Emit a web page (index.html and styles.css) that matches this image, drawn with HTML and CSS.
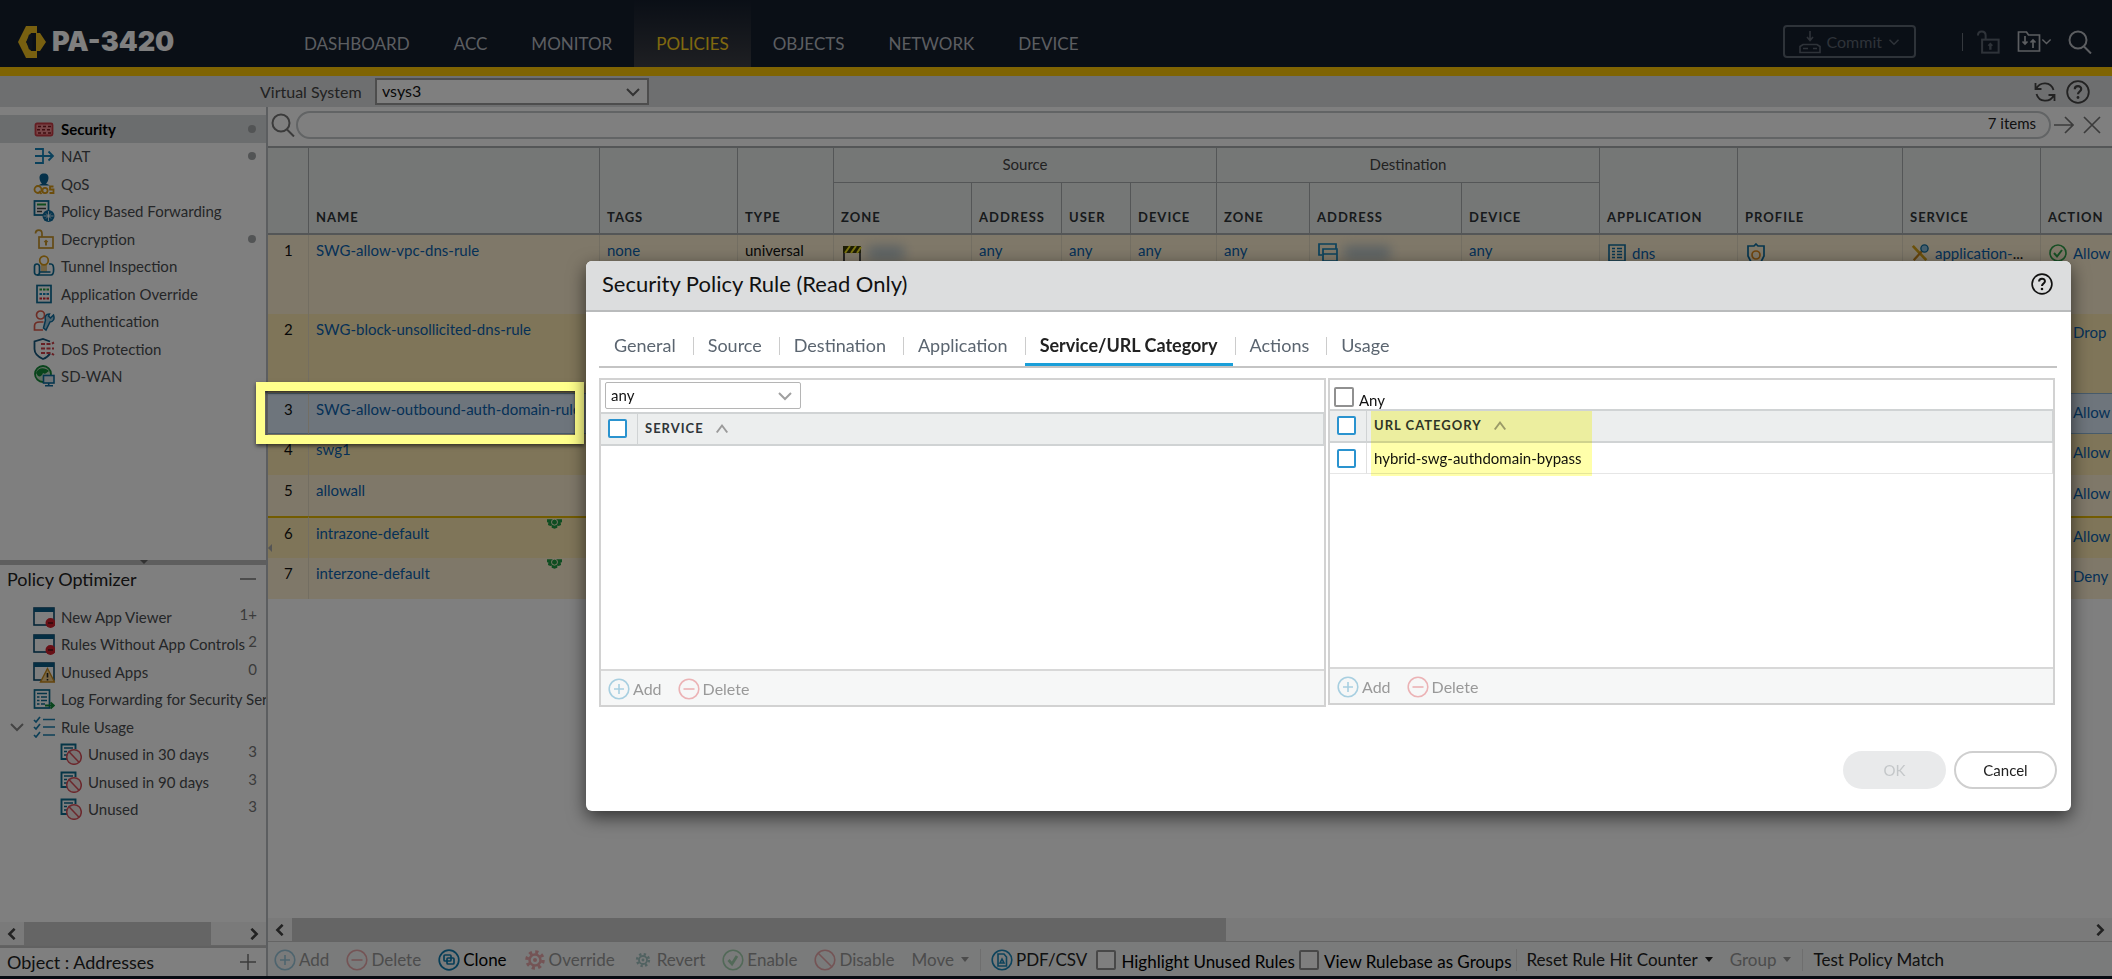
FILE: index.html
```html
<!DOCTYPE html>
<html lang="en">
<head>
	<meta charset="utf-8"/>
	<meta name="viewport" content="width=device-width,initial-scale=1.0"/>
	<title>PA-3420</title>
	<link rel="stylesheet" href="styles.css">
</head>
<body>

<!-- icon sprite -->
<svg class="sprite" aria-hidden="true">
	<symbol id="i-chevron" viewBox="0 0 16 16"><path d="M2 5l6 6 6-6" fill="none" stroke="currentColor" stroke-width="2"/></symbol>
	<symbol id="i-bold" viewBox="0 0 16 16"><path d="M1 4.500l7 7 7-7" fill="none" stroke="currentColor" stroke-width="3.400"/></symbol>
	<symbol id="i-sort" viewBox="0 0 16 16"><path d="M2 12l6-8 6 8" fill="none" stroke="currentColor" stroke-width="2.200"/></symbol>
	<symbol id="i-search" viewBox="0 0 24 24"><g fill="none" stroke="currentColor" stroke-width="2"><circle cx="10" cy="10" r="8.5"/><path d="M16 16.5l7 7"/></g></symbol>
	<symbol id="i-help" viewBox="0 0 24 24"><circle cx="12" cy="12" r="10.8" fill="none" stroke="currentColor" stroke-width="1.8"/><path d="M8.8 9.2c0-4 6.400-4 6.400-.2 0 2.500-3.200 2.500-3.200 5.300" fill="none" stroke="currentColor" stroke-width="2.200"/><circle cx="12" cy="17.500" r="1.400" fill="currentColor"/></symbol>
	<symbol id="i-plus" viewBox="0 0 22 22"><g fill="none" stroke="#1a86b8" stroke-width="1.600"><circle cx="11" cy="11" r="9.800"/><path d="M11 6v10M6 11h10"/></g></symbol>
	<symbol id="i-minus" viewBox="0 0 22 22"><g fill="none" stroke="#d9363e" stroke-width="1.600"><circle cx="11" cy="11" r="9.800"/><path d="M5.500 11h11"/></g></symbol>
	<symbol id="i-wall" viewBox="0 0 22 22"><rect x="2.500" y="5.500" width="17" height="12" rx="1.500" fill="#f08c90" stroke="#c93a44" stroke-width="1.800"/><path d="M5 8.500h3M10 8.500h3M15 8.500h3M4 11.700h3M9 11.700h3M14 11.700h3M5 15h3M10 15h3M15 15h3" stroke="#7c1a22" stroke-width="1.500"/></symbol>
	<symbol id="i-nat" viewBox="0 0 22 22"><g fill="none" stroke="#1583b9" stroke-width="1.800"><path d="M2 4h8v14H2M2 11h18M15.500 6.500L20 11l-4.500 4.500"/></g></symbol>
	<symbol id="i-qos" viewBox="0 0 22 22"><path d="M11 0.500c3.500 0 4.500 2 4.500 4.500S14 10 13 10.500l4 2H5l4-2C8 10 6.500 7.500 6.500 5S7.500.5 11 .5z" fill="#0b6394"/><g fill="none" stroke="#d99a17" stroke-width="1.800"><circle cx="5" cy="16.500" r="3.500"/><path d="M6 18l2.500 3"/><circle cx="12" cy="17.500" r="2.600"/><path d="M20.500 13.500h-3.500v3h3.500v3.500h-4"/></g></symbol>
	<symbol id="i-pbf" viewBox="0 0 22 22"><rect x="1.500" y="1" width="14" height="14" fill="none" stroke="#0b6b94" stroke-width="1.800"/><path d="M4 4.500h9" stroke="#219a3b" stroke-width="2"/><path d="M4 8.500h9M4 11.500h5" stroke="#444" stroke-width="1.600"/><circle cx="15.500" cy="16" r="6" fill="#0f6d9e"/><path d="M15.500 11v10M10.500 16h10M13 13.500l5 5M18 13.500l-5 5" stroke="#fff" stroke-width=".8"/></symbol>
	<symbol id="i-unlock" viewBox="0 0 22 22"><g fill="none" stroke="currentColor" stroke-width="1.700"><rect x="6" y="9" width="14" height="11"/><path d="M9 9V5.500C9 1 2.500 1 2.500 5.500"/></g><path d="M13 11.500l2.300 2.300-1.300.7V17.500h-2v-3l-1.300-.7z" fill="currentColor"/></symbol>
	<symbol id="i-tunnel" viewBox="0 0 22 22"><path d="M8 10h6v7H8z" fill="#e8c987"/><circle cx="11" cy="5.500" r="4.300" fill="none" stroke="#d99a17" stroke-width="1.700"/><g fill="none" stroke="#0b6b94" stroke-width="1.700"><rect x="1.500" y="9" width="5" height="11" rx="2.500"/><path d="M4 20h14c3.500 0 3.500-11 0-11h-2M6.500 17h11"/></g></symbol>
	<symbol id="i-appover" viewBox="0 0 22 22"><rect x="4" y="2.500" width="14" height="17" fill="none" stroke="#0b6b94" stroke-width="1.700"/><path d="M6.500 6.500h2.500M10 6.500h2.500M13.500 6.500h2.500" stroke="#219a3b" stroke-width="2.200"/><path d="M6.500 11h2.500M10 11h2.500M13.500 11h2.500" stroke="#1583b9" stroke-width="2.200"/><path d="M6.500 15.500h2.500M10 15.500h2.500M13.500 15.500h2.500" stroke="#d4202c" stroke-width="2.200"/></symbol>
	<symbol id="i-auth" viewBox="0 0 22 22"><g fill="none" stroke="#db5a4a" stroke-width="1.700"><circle cx="7.500" cy="5" r="4"/><path d="M10 20H1.500v-4c0-3 2-4 5-4h4"/></g><path d="M20.500 5l-3 3-2-2 1-2c-4 0-5 3-4 6l-2 8 2.500 2 4-8c3 0 5-3 3.500-7z" fill="#9fc8dd" stroke="#0f6d9e" stroke-width="1.500"/></symbol>
	<symbol id="i-dos" viewBox="0 0 22 22"><path d="M17 3.500l-7-2.500-8.500 2.500V11c0 5 4 8 8.500 10 3-1 5.500-3 7-5.500" fill="none" stroke="#16587f" stroke-width="1.800"/><path d="M8 6h10l3-1.500M8 10.500h13M8 15h10l3 2" fill="none" stroke="#cf3f48" stroke-width="2" stroke-dasharray="4 1.500"/></symbol>
	<symbol id="i-sdwan" viewBox="0 0 22 22"><circle cx="10" cy="9" r="8" fill="#c2ddc4" stroke="#128a38" stroke-width="1.800"/><path d="M3 8c2-6 9-6 13-2-2 1-3 4-6 2-1 3-3 4-5 3z" fill="#128a38"/><rect x="10.500" y="10.500" width="10.500" height="7.500" fill="#dfe9ef" stroke="#0f6d9e" stroke-width="1.600"/><path d="M15.700 18v2.500M12 20.800h8" stroke="#0f6d9e" stroke-width="1.600"/></symbol>
	<symbol id="i-appview" viewBox="0 0 22 22"><rect x="1" y="2" width="20" height="17" fill="none" stroke="#0a4a6e" stroke-width="1.600"/><path d="M1 2h20v4H1z" fill="#0a5d86"/><circle cx="17.500" cy="17" r="5" fill="#d0202c"/><path d="M15 17h5" stroke="#5b1218" stroke-width="1.500"/></symbol>
	<symbol id="i-appwarn" viewBox="0 0 22 22"><rect x="1" y="2" width="20" height="17" fill="none" stroke="#0a4a6e" stroke-width="1.600"/><path d="M1 2h20v4H1z" fill="#0a5d86"/><path d="M14.500 7.500L21.500 21h-14z" fill="#f3cf8c" stroke="#c98a1a" stroke-width="1.400"/><path d="M14.500 12v4.500M14.500 18v1.500" stroke="#222" stroke-width="1.600"/></symbol>
	<symbol id="i-log" viewBox="0 0 22 22"><rect x="1.500" y="2" width="15" height="18" fill="none" stroke="#0a6a8e" stroke-width="1.700"/><path d="M4 5.500h10M4 9h2.500M8 9h6M4 12.500h2.500M8 12.500h6M4 16h2.500M8 16h4" stroke="#0a6a8e" stroke-width="1.600"/><path d="M12 17.500h8M17.500 14.500l3.500 3-3.500 3" fill="none" stroke="#128a38" stroke-width="1.800"/></symbol>
	<symbol id="i-usage" viewBox="0 0 22 22"><g fill="none" stroke="#1a7fae" stroke-width="1.700"><path d="M1 4l2 2 4-5M1 11l2 2 4-5M1 19l2 2 4-5M10 3.500h12M10 11h12M10 19h12"/></g></symbol>
	<symbol id="i-unused" viewBox="0 0 22 22"><path d="M7 16H1.500V1.500h14V6" fill="none" stroke="#0a6a8e" stroke-width="1.900"/><path d="M4 5h9M4 8.500h3M4 12h3M8.500 8.500h3" stroke="#0a6a8e" stroke-width="1.600"/><circle cx="14" cy="14" r="7.300" fill="#efe0e0" fill-opacity=".8" stroke="#d8505a" stroke-width="1.500"/><path d="M9 8.800L19 19.200" stroke="#d8505a" stroke-width="1.500"/></symbol>
	<symbol id="i-gear" viewBox="0 0 22 22"><circle cx="11" cy="11" r="8" fill="none" stroke="currentColor" stroke-width="3.500" stroke-dasharray="3.140 3.140"/><circle cx="11" cy="11" r="5.500" fill="none" stroke="currentColor" stroke-width="2.500"/><circle cx="11" cy="11" r="2" fill="currentColor"/></symbol>
	<symbol id="i-cog" viewBox="0 0 16 10"><path d="M0 0h16v3l-1.500.5L15 6l-2.500 1-1.500-.5V9L8 10 5 9V6.500L3.500 7 1 6l.5-2.500L0 3z" fill="currentColor"/><circle cx="8" cy="3" r="3.200" fill="none" stroke="#fff1d3" stroke-width="1"/></symbol>
</svg>

<div class="app">
	<header class="topbar">
		<a class="logo" href="#">
			<svg class="logo__mark" viewBox="0 0 28 32"><path fill="#f0c020" fill-rule="evenodd" d="M8 0h11v7h3l6 9-6 9h-3v7H8L0 16zM13 7l-5 9 5 9h5V7z"/><path d="M11 8.500h3.500v15H11L8.500 16z" fill="#1b2636"/></svg>
			<span>PA-3420</span>
		</a>
		<nav class="menu">
			<a class="menu__item" href="#">DASHBOARD</a>
			<a class="menu__item" href="#">ACC</a>
			<a class="menu__item" href="#">MONITOR</a>
			<a class="menu__item menu__item_on" href="#">POLICIES</a>
			<a class="menu__item" href="#">OBJECTS</a>
			<a class="menu__item" href="#">NETWORK</a>
			<a class="menu__item" href="#">DEVICE</a>
		</nav>
		<div class="topbar__tools">
			<button class="commit" type="button">
				<svg width="22" height="24" viewBox="0 0 22 24" fill="none" stroke="currentColor" stroke-width="1.600"><path d="M11 1v9M8 7l3 3.500L14 7M4 14.500h14l3 2v6H1v-6zM4 18.500h5M14 18.500h4"/></svg>
				<span>Commit</span>
				<svg width="12" height="12"><use href="#i-chevron"/></svg>
			</button>
			<i class="topbar__sep"></i>
			<button class="tool tool_dim" type="button" aria-label="Locks"><svg width="26" height="26"><use href="#i-unlock"/></svg></button>
			<button class="tool" type="button" aria-label="Config">
				<svg width="24" height="24" viewBox="0 0 24 24" fill="none" stroke="currentColor" stroke-width="1.700"><path d="M1.500 2h8l2 3h11v16h-21zM8 6v8M5.500 11.500L8 14l2.500-2.500M16 18v-8M13.500 12.500L16 10l2.500 2.500"/></svg>
				<svg width="11" height="11"><use href="#i-chevron"/></svg>
			</button>
			<button class="tool" type="button" aria-label="Search"><svg width="24" height="24"><use href="#i-search"/></svg></button>
		</div>
	</header>

	<div class="vsys">
		<label class="vsys__label" for="vsys">Virtual System</label>
		<span class="pick vsys__pick">
			<select id="vsys"><option>vsys3</option></select>
			<svg><use href="#i-chevron"/></svg>
		</span>
		<div class="vsys__tools">
			<button class="tool" type="button" aria-label="Refresh"><svg width="22" height="22" viewBox="0 0 22 22" fill="none" stroke="currentColor" stroke-width="1.800"><path d="M1.500 2v6h6M20.500 20v-6h-6M2 8C6 0 17 .5 19.500 9M20 14C16 22 5 21.500 2.500 13"/></svg></button>
			<button class="tool" type="button" aria-label="Help"><svg width="24" height="24"><use href="#i-help"/></svg></button>
		</div>
	</div>

	<div class="body">
		<aside class="side">
			<ul class="tree tree_top">
				<li class="tree__row tree__row_on"><svg><use href="#i-wall"/></svg><a href="#">Security</a><i class="dot"></i></li>
				<li class="tree__row"><svg><use href="#i-nat"/></svg><a href="#">NAT</a><i class="dot"></i></li>
				<li class="tree__row"><svg><use href="#i-qos"/></svg><a href="#">QoS</a></li>
				<li class="tree__row"><svg><use href="#i-pbf"/></svg><a href="#">Policy Based Forwarding</a></li>
				<li class="tree__row"><svg class="gold"><use href="#i-unlock"/></svg><a href="#">Decryption</a><i class="dot"></i></li>
				<li class="tree__row"><svg><use href="#i-tunnel"/></svg><a href="#">Tunnel Inspection</a></li>
				<li class="tree__row"><svg><use href="#i-appover"/></svg><a href="#">Application Override</a></li>
				<li class="tree__row"><svg><use href="#i-auth"/></svg><a href="#">Authentication</a></li>
				<li class="tree__row"><svg><use href="#i-dos"/></svg><a href="#">DoS Protection</a></li>
				<li class="tree__row"><svg><use href="#i-sdwan"/></svg><a href="#">SD-WAN</a></li>
			</ul>
			<div class="split"><i></i></div>
			<div class="side__head">
				<span>Policy Optimizer</span>
				<button type="button" aria-label="Collapse"><svg width="16" height="16" viewBox="0 0 16 16"><path d="M0 8h16" stroke="currentColor" stroke-width="1.500"/></svg></button>
			</div>
			<ul class="tree tree_opt">
				<li class="tree__row"><svg><use href="#i-appview"/></svg><a href="#">New App Viewer</a><b>1+</b></li>
				<li class="tree__row"><svg><use href="#i-appview"/></svg><a href="#">Rules Without App Controls</a><b>2</b></li>
				<li class="tree__row"><svg><use href="#i-appwarn"/></svg><a href="#">Unused Apps</a><b>0</b></li>
				<li class="tree__row tree__row_long"><svg><use href="#i-log"/></svg><a href="#">Log Forwarding for Security Ser</a></li>
				<li class="tree__row tree__row_open"><svg class="tree__arrow"><use href="#i-chevron"/></svg><svg><use href="#i-usage"/></svg><a href="#">Rule Usage</a></li>
				<li class="tree__row tree__row_sub"><svg><use href="#i-unused"/></svg><a href="#">Unused in 30 days</a><b>3</b></li>
				<li class="tree__row tree__row_sub"><svg><use href="#i-unused"/></svg><a href="#">Unused in 90 days</a><b>3</b></li>
				<li class="tree__row tree__row_sub"><svg><use href="#i-unused"/></svg><a href="#">Unused</a><b>3</b></li>
			</ul>
			<div class="scroll scroll_side">
				<svg class="scroll__left"><use href="#i-bold"/></svg>
				<div class="scroll__track"><i class="scroll__thumb scroll__thumb_side"></i></div>
				<svg class="scroll__right"><use href="#i-bold"/></svg>
			</div>
			<div class="side__foot">
				<span>Object : Addresses</span>
				<button type="button" aria-label="Expand"><svg width="16" height="16" viewBox="0 0 16 16"><path d="M0 8h16M8 0v16" stroke="currentColor" stroke-width="1.500"/></svg></button>
			</div>
		</aside>

		<main class="main">
			<div class="find">
				<svg width="24" height="24"><use href="#i-search"/></svg>
				<div class="find__box">
					<input type="text" aria-label="Filter rules">
					<span>7 items</span>
				</div>
				<svg width="20" height="20" viewBox="0 0 20 20" fill="none" stroke="currentColor" stroke-width="1.700"><path d="M0 10h19M11 2l8 8-8 8"/></svg>
				<svg width="18" height="18" viewBox="0 0 18 18" fill="none" stroke="currentColor" stroke-width="1.700"><path d="M1 1l16 16M17 1L1 17"/></svg>
			</div>

			<div class="grid">
				<i class="grid__fold"></i>
				<table class="rules">
					<colgroup>
						<col class="c41"><col class="c291"><col class="c138"><col class="c96"><col class="c138"><col class="c90"><col class="c69"><col class="c86"><col class="c93"><col class="c152"><col class="c138"><col class="c138"><col class="c165"><col class="c138"><col class="c138">
					</colgroup>
					<thead>
						<tr>
							<th rowspan="2"></th>
							<th rowspan="2">NAME</th>
							<th rowspan="2">TAGS</th>
							<th rowspan="2">TYPE</th>
							<th class="rules__group" colspan="4">Source</th>
							<th class="rules__group" colspan="3">Destination</th>
							<th rowspan="2">APPLICATION</th>
							<th rowspan="2">PROFILE</th>
							<th rowspan="2">SERVICE</th>
							<th rowspan="2">ACTION</th>
						</tr>
						<tr class="rules__sub">
							<th>ZONE</th><th>ADDRESS</th><th>USER</th><th>DEVICE</th><th>ZONE</th><th>ADDRESS</th><th>DEVICE</th>
						</tr>
					</thead>
					<tbody>
						<tr class="tall">
							<td>1</td>
							<td><a href="#">SWG-allow-vpc-dns-rule</a></td>
							<td><a href="#">none</a></td>
							<td>universal</td>
							<td>
								<span class="cell"><svg width="20" height="20" viewBox="0 0 20 20"><path d="M1 3h18v7H1z" fill="#3a3a08"/><path d="M3 10l5-7M9 10l5-7M15 10l4-6" stroke="#f5e61e" stroke-width="2"/><path d="M2 10v10M18 10v10" stroke="#222" stroke-width="1.600"/></svg><i class="smudge"></i></span>
							</td>
							<td><a href="#">any</a></td>
							<td><a href="#">any</a></td>
							<td><a href="#">any</a></td>
							<td><a href="#">any</a></td>
							<td>
								<span class="cell"><svg width="20" height="20" viewBox="0 0 20 20" fill="none" stroke="#1583b9" stroke-width="1.700"><path d="M4 12H1V1h17v5M5 6h14v12H5zM5 11h14"/></svg><i class="smudge smudge_wide"></i></span>
							</td>
							<td><a href="#">any</a></td>
							<td>
								<span class="cell"><svg width="18" height="18" viewBox="0 0 18 18" fill="none" stroke="#0f6d9e" stroke-width="1.600"><path d="M1 1h16v16H1zM4 4.500h3M9 4.500h5M4 7.500h3M9 7.500h5M4 10.500h3M9 10.500h5M4 13.500h3M9 13.500h5"/></svg><a href="#">dns</a></span>
							</td>
							<td>
								<span class="cell"><svg width="20" height="20" viewBox="0 0 20 20" fill="none" stroke-width="1.700"><path d="M10 1l2 2h6v10l-3 6H5l-3-6V3h6z" stroke="#0f6d9e"/><circle cx="10" cy="12" r="4" stroke="#e08a1c"/></svg></span>
							</td>
							<td>
								<span class="cell"><svg width="18" height="18" viewBox="0 0 20 20" fill="none"><path d="M2 2l15 16" stroke="#d9a417" stroke-width="3"/><path d="M3 18L13 7" stroke="#c8861a" stroke-width="2.500"/><circle cx="15" cy="5" r="4" fill="#8fc0dc" stroke="#0f6d9e" stroke-width="1.500"/></svg><a href="#">application-<em>...</em></a></span>
							</td>
							<td>
								<span class="cell"><svg width="18" height="18" viewBox="0 0 18 18" fill="none" stroke="#2f9e4a" stroke-width="1.600"><circle cx="9" cy="9" r="8"/><path d="M5 9l3 3.500L13 6" stroke-width="2"/></svg><a href="#">Allow</a></span>
							</td>
						</tr>
						<tr class="tall even">
							<td>2</td><td><a href="#">SWG-block-unsollicited-dns-rule</a></td>
							<td></td><td></td><td></td><td></td><td></td><td></td><td></td><td></td><td></td><td></td><td></td><td></td>
							<td><span class="cell"><i class="pad"></i><a href="#">Drop</a></span></td>
						</tr>
						<tr class="picked">
							<td>3</td><td><a href="#">SWG-allow-outbound-auth-domain-rule</a></td>
							<td></td><td></td><td></td><td></td><td></td><td></td><td></td><td></td><td></td><td></td><td></td><td></td>
							<td><span class="cell"><i class="pad"></i><a href="#">Allow</a></span></td>
						</tr>
						<tr class="even">
							<td>4</td><td><a href="#">swg1</a></td>
							<td></td><td></td><td></td><td></td><td></td><td></td><td></td><td></td><td></td><td></td><td></td><td></td>
							<td><span class="cell"><i class="pad"></i><a href="#">Allow</a></span></td>
						</tr>
						<tr>
							<td>5</td><td><a href="#">allowall</a></td>
							<td></td><td></td><td></td><td></td><td></td><td></td><td></td><td></td><td></td><td></td><td></td><td></td>
							<td><span class="cell"><i class="pad"></i><a href="#">Allow</a></span></td>
						</tr>
						<tr class="even default">
							<td>6</td><td><a href="#">intrazone-default</a><svg class="cog"><use href="#i-cog"/></svg></td>
							<td></td><td></td><td></td><td></td><td></td><td></td><td></td><td></td><td></td><td></td><td></td><td></td>
							<td><span class="cell"><i class="pad"></i><a href="#">Allow</a></span></td>
						</tr>
						<tr>
							<td>7</td><td><a href="#">interzone-default</a><svg class="cog"><use href="#i-cog"/></svg></td>
							<td></td><td></td><td></td><td></td><td></td><td></td><td></td><td></td><td></td><td></td><td></td><td></td>
							<td><span class="cell"><i class="pad"></i><a href="#">Deny</a></span></td>
						</tr>
					</tbody>
				</table>
			</div>

			<div class="scroll">
				<svg class="scroll__left"><use href="#i-bold"/></svg>
				<div class="scroll__track"><i class="scroll__thumb"></i></div>
				<svg class="scroll__right"><use href="#i-bold"/></svg>
			</div>

			<div class="actions">
				<button type="button" disabled><svg><use href="#i-plus"/></svg>Add</button>
				<button type="button" disabled><svg><use href="#i-minus"/></svg>Delete</button>
				<button class="strong" type="button"><svg viewBox="0 0 22 22" fill="none" stroke="#0f7cb0" stroke-width="1.700"><circle cx="11" cy="11" r="9.800"/><rect x="6" y="6" width="7" height="6" rx="1"/><rect x="9" y="9" width="7" height="6" rx="1"/></svg>Clone</button>
				<button type="button" disabled><svg class="red"><use href="#i-gear"/></svg>Override</button>
				<button type="button" disabled><svg class="teal" viewBox="-4 -4 30 30"><use href="#i-gear" width="22" height="22"/></svg>Revert</button>
				<button type="button" disabled><svg viewBox="0 0 22 22" fill="none" stroke="#2f9e4a" stroke-width="1.600"><circle cx="11" cy="11" r="9.800"/><path d="M6.500 11l3.500 4 5-8" stroke-width="2.800"/></svg>Enable</button>
				<button type="button" disabled><svg viewBox="0 0 22 22" fill="none" stroke="#d9363e" stroke-width="1.600"><circle cx="11" cy="11" r="9.800"/><path d="M4 4l14 14"/></svg>Disable</button>
				<button class="drop drop_last" type="button" disabled>Move</button>
				<i class="actions__sep"></i>
				<button class="pdf" type="button"><svg viewBox="0 0 22 22" fill="none" stroke="#1a86b8" stroke-width="1.600"><circle cx="11" cy="11" r="9.800"/><path d="M7 5h6l2.500 3v9H7zM9 14l2-4 2 4z"/></svg>PDF/CSV</button>
				<label class="tick"><input type="checkbox"><span>Highlight Unused Rules</span></label>
				<label class="tick"><input type="checkbox"><span>View Rulebase as Groups</span></label>
				<i class="actions__sep"></i>
				<button class="drop" type="button">Reset Rule Hit Counter</button>
				<button class="drop drop_last" type="button" disabled>Group</button>
				<i class="actions__sep"></i>
				<button type="button">Test Policy Match</button>
			</div>
		</main>
	</div>
</div>

<div class="mask"></div>
<div class="mark"></div>

<!-- rule dialog -->
<section class="dialog" role="dialog" aria-labelledby="dialog-title">
	<header class="dialog__head">
		<h1 id="dialog-title">Security Policy Rule (Read Only)</h1>
		<button type="button" aria-label="Help"><svg width="22" height="22"><use href="#i-help"/></svg></button>
	</header>
	<nav class="tabs">
		<a class="tabs__item" href="#">General</a>
		<a class="tabs__item" href="#">Source</a>
		<a class="tabs__item" href="#">Destination</a>
		<a class="tabs__item" href="#">Application</a>
		<a class="tabs__item tabs__item_on" href="#">Service/URL Category</a>
		<a class="tabs__item" href="#">Actions</a>
		<a class="tabs__item" href="#">Usage</a>
	</nav>
	<div class="panels">
		<div class="panel panel_service">
			<div class="panel__bar">
				<span class="pick pick_light panel__pick">
					<select aria-label="Service"><option>any</option></select>
					<svg><use href="#i-chevron"/></svg>
				</span>
			</div>
			<table class="list">
				<thead><tr><th class="list__tick"><input type="checkbox" aria-label="Select all services"></th><th>SERVICE<svg><use href="#i-sort"/></svg></th></tr></thead>
			</table>
			<div class="panel__foot">
				<button type="button" disabled><svg><use href="#i-plus"/></svg>Add</button>
				<button type="button" disabled><svg><use href="#i-minus"/></svg>Delete</button>
			</div>
		</div>
		<div class="panel panel_url">
			<div class="panel__bar">
				<label class="tick"><input type="checkbox"><span>Any</span></label>
			</div>
			<table class="list">
				<thead><tr><th class="list__tick"><input type="checkbox" aria-label="Select all categories"></th><th>URL CATEGORY<svg><use href="#i-sort"/></svg><i class="marker"></i></th></tr></thead>
				<tbody><tr><td class="list__tick"><input type="checkbox" aria-label="Select hybrid-swg-authdomain-bypass"></td><td>hybrid-swg-authdomain-bypass</td></tr></tbody>
			</table>
			<div class="panel__foot">
				<button type="button" disabled><svg><use href="#i-plus"/></svg>Add</button>
				<button type="button" disabled><svg><use href="#i-minus"/></svg>Delete</button>
			</div>
		</div>
	</div>
	<footer class="dialog__foot">
		<button class="btn" type="button" disabled>OK</button>
		<button class="btn btn_line" type="button">Cancel</button>
	</footer>
</section>

</body>
</html>
```
FILE: styles.css
```css
*{
	box-sizing: border-box;
}
html,body{
	height: 100%;
}
body{
	margin: 0;
	overflow: hidden;
	font: 15px/20px Lato, "Liberation Sans", sans-serif;
	color: #222;
	background: #fff;
}
a{
	color: inherit;
	text-decoration: none;
}
button{
	display: flex;
	align-items: center;
	margin: 0;
	padding: 0;
	border: 0;
	background: none;
	font: inherit;
	color: inherit;
	cursor: pointer;
}
svg{
	flex: none;
}
.sprite{
	display: none;
}
input[type=checkbox]{
	-webkit-appearance: none;
	appearance: none;
	display: block;
	flex: none;
	width: 20px;
	height: 20px;
	margin: 0;
	border: 2px solid #909090;
	border-radius: 2px;
	background: #fff;
}
.tick{
	display: flex;
	align-items: center;
}
.tick span{
	padding: 6px 0 0 5px;
}

/* drop-down */
.pick{
	position: relative;
	display: block;
}
.pick select{
	-webkit-appearance: none;
	appearance: none;
	display: block;
	width: 100%;
	height: 27px;
	margin: 0;
	padding: 0 26px 2px 5px;
	border: 2px solid #9a9a9a;
	border-radius: 0;
	background: #fff;
	font: inherit;
	color: #111;
}
.pick svg{
	position: absolute;
	right: 8px;
	top: 6px;
	width: 16px;
	height: 16px;
	color: #666;
	pointer-events: none;
}
.pick_light select{
	border: 1px solid #b5b5b5;
	border-radius: 2px;
}
.pick_light svg{
	color: #a0a0a0;
}

.app{
	display: flex;
	flex-direction: column;
	height: 100vh;
	border-bottom: 3px solid #0e1724;
}

/* top bar */
.topbar{
	display: flex;
	flex: none;
	height: 76px;
	border-bottom: 9px solid #ffc907;
	background: #151e2d;
	color: #b8bcc2;
	font-size: 17px;
}
.logo{
	display: flex;
	align-items: center;
	gap: 6px;
	width: 282px;
	padding: 16px 0 0 18px;
	font: 900 27px/32px Inter, "Liberation Sans", sans-serif;
	color: #fff;
}
.logo__mark{
	width: 28px;
	height: 32px;
}
.menu{
	display: flex;
}
.menu__item{
	padding: 34px 22px 0;
}
.menu__item_on{
	background: linear-gradient(#151e2d,#3d3f45);
	color: #ffd21e;
}
.topbar__tools{
	display: flex;
	align-items: center;
	margin: 16px 20px 0 auto;
}
.commit{
	gap: 6px;
	height: 33px;
	padding: 0 14px;
	border: 2px solid #5d6672;
	border-radius: 4px;
	color: #5d6672;
	font-size: 16px;
}
.topbar__sep{
	width: 1px;
	height: 18px;
	margin: 0 12px 0 46px;
	background: #6a727c;
}
.tool_dim{
	color: #5d6672;
}
.topbar .tool + .tool{
	margin-left: 16px;
}

/* virtual system */
.vsys{
	display: flex;
	flex: none;
	align-items: center;
	height: 31px;
	padding-left: 260px;
	background: #dcdee0;
	font-size: 16px;
	color: #444;
}
.vsys__label{
	width: 115px;
}
.vsys__pick{
	width: 274px;
}
.vsys__tools{
	display: flex;
	gap: 10px;
	margin: 0 22px 0 auto;
}

.body{
	display: flex;
	flex: 1;
	min-height: 0;
}

/* left side */
.side{
	display: flex;
	flex: none;
	flex-direction: column;
	width: 268px;
	border-right: 2px solid #b9bdc0;
	overflow: hidden;
	color: #4a4d50;
}
.tree{
	display: grid;
	flex: none;
	grid-auto-rows: 1fr;
	margin: 0;
	padding: 0;
	list-style: none;
}
.tree_top{
	height: 275px;
	margin: 8px 0 170px;
}
.tree_opt{
	height: 220px;
	margin: 11px 0 auto;
}
.tree__row{
	display: flex;
	align-items: center;
	min-width: 0;
	padding: 0 9px 0 33px;
	white-space: nowrap;
}
.tree__row > svg{
	width: 22px;
	height: 22px;
	margin-right: 6px;
}
.tree__row_on{
	background: #d6dadc;
	color: #000;
	font-weight: bold;
}
.tree__row_long{
	padding-right: 0;
}
.tree__row_open{
	padding-left: 9px;
}
.tree__row > .tree__arrow{
	width: 16px;
	height: 16px;
	margin-right: 8px;
	color: #888;
}
.tree__row_sub{
	padding-left: 60px;
}
.tree__row b{
	margin-left: auto;
	padding-bottom: 6px;
	font-weight: normal;
	color: #777;
}
.dot{
	width: 8px;
	height: 8px;
	margin: 0 1px 0 auto;
	border-radius: 50%;
	background: #a5a8aa;
}
.gold{
	color: #c9962a;
}
.split{
	flex: none;
	height: 5px;
	background: #bcbcbc;
}
.split i{
	display: block;
	width: 0;
	margin: 0 auto 0 140px;
	border: 4px solid transparent;
	border-top-color: #666;
}
.side__head,
.side__foot{
	display: flex;
	flex: none;
	align-items: center;
	justify-content: space-between;
	height: 27px;
	padding: 0 10px 0 7px;
	font-size: 18px;
	color: #222;
}
.side__foot{
	border-top: 2px solid #c2c2c2;
	height: 30px;
}
.side__head svg,
.side__foot svg{
	color: #777;
}

/* scroll bars */
.scroll{
	display: flex;
	flex: none;
	align-items: center;
	height: 24px;
	border-bottom: 1px solid #c8c8c8;
	background: #f4f4f4;
	color: #444;
}
.scroll svg{
	width: 12px;
	height: 12px;
	margin: 0 6px;
}
.scroll__left{
	transform: rotate(90deg);
}
.scroll__right{
	transform: rotate(-90deg);
}
.scroll__track{
	flex: 1;
	height: 100%;
}
.scroll__thumb{
	display: block;
	width: 52%;
	height: 100%;
	background: #cbcbcb;
}
.scroll__thumb_side{
	width: 86%;
}

/* rule list */
.main{
	display: flex;
	flex: 1;
	flex-direction: column;
	min-width: 0;
}
.find{
	display: flex;
	flex: none;
	align-items: center;
	height: 39px;
	padding: 0 11px 3px 3px;
	color: #777;
}
.find__box{
	display: flex;
	flex: 1;
	height: 28px;
	margin: 0 3px 0 1px;
	padding: 0 13px;
	border: 2px solid #c4c8ca;
	border-radius: 14px;
	color: #222;
}
.find__box input{
	flex: 1;
	border: 0;
	background: none;
	font: inherit;
}
.find__box + svg{
	margin-right: 9px;
}
.grid{
	position: relative;
	flex: 1;
	min-height: 0;
	overflow: hidden;
}
.grid__fold{
	position: absolute;
	z-index: 1;
	left: 0;
	top: 398px;
	border: 4px solid transparent;
	border-left: 0;
	border-right-color: #555;
}
.rules{
	width: 1909px;
	border-spacing: 0;
	table-layout: fixed;
}
.c41{ width: 41px; }
.c69{ width: 69px; }
.c86{ width: 86px; }
.c90{ width: 90px; }
.c93{ width: 93px; }
.c96{ width: 96px; }
.c138{ width: 138px; }
.c152{ width: 152px; }
.c165{ width: 165px; }
.c291{ width: 291px; }
.rules th{
	height: 37px;
	padding: 0 7px 6px;
	border: solid #a9adaf;
	border-width: 2px 1px 2px 0;
	background: #ebeeed;
	font-size: 13px;
	letter-spacing: 1px;
	text-align: left;
	vertical-align: bottom;
	white-space: nowrap;
	color: #2f3538;
}
.rules .rules__group{
	padding: 0 0 2px;
	border-bottom-width: 1px;
	font-size: 15px;
	font-weight: normal;
	letter-spacing: 0;
	text-align: center;
	vertical-align: middle;
	color: #444;
}
.rules .rules__sub th{
	height: 52px;
	border-top: 0;
}
.rules td{
	position: relative;
	height: 41px;
	padding: 5px 0 0 7px;
	border-right: 1px solid #e6dcc4;
	background: #fff1d3;
	vertical-align: top;
	white-space: nowrap;
	overflow: hidden;
	color: #111;
}
.rules td:first-child{
	padding: 5px 0 0;
	text-indent: 16px;
}
.rules td a{
	color: #0b62ae;
}
.rules .tall td{
	height: 79px;
}
.rules .even td{
	background: #ffebb2;
}
.rules .picked td{
	border-top: 1px solid #8fb6d6;
	border-bottom: 1px solid #8fb6d6;
	background: #dcebf8;
}
.rules .default td{
	height: 42px;
	border-top: 2px solid #e6b800;
}
.cell{
	display: flex;
	align-items: center;
	padding-top: 3px;
}
.cell svg,
.pad{
	margin: 0 6px 0 1px;
}
.pad{
	width: 18px;
}
.cell em{
	font-style: normal;
	color: #111;
}
.smudge{
	width: 36px;
	height: 14px;
	background: #b4c2c8;
	filter: blur(6px);
}
.smudge_wide{
	width: 46px;
}
.cog{
	position: absolute;
	right: 37px;
	top: 1px;
	width: 15px;
	height: 10px;
	color: #1f9a43;
}

/* bottom tool bar */
.actions{
	display: flex;
	flex: none;
	align-items: center;
	height: 34px;
	padding: 2px 0 0 6px;
	background: #f4f6f6;
	font-size: 17px;
	white-space: nowrap;
	color: #222;
}
.actions button{
	margin-right: 17px;
}
.actions button svg,
.panel__foot svg{
	width: 22px;
	height: 22px;
	margin-right: 3px;
}
.actions button:disabled,
.panel__foot button:disabled{
	color: #999;
}
.actions button:disabled svg{
	opacity: .4;
}
.actions .strong{
	color: #000;
}
.actions .pdf{
	margin-right: 9px;
}
.actions .drop:after{
	content: '';
	margin: 0 0 2px 7px;
	border: 4px solid transparent;
	border-top: 5px solid currentColor;
	border-bottom: 0;
}
.actions .drop_last{
	margin-right: 11px;
}
.actions .tick{
	margin-right: 4px;
	color: #000;
}
.actions .tick span{
	padding-top: 4px;
}
.actions__sep{
	width: 1px;
	height: 22px;
	margin: 0 10px 0 0;
	background: #dcdcdc;
}
.red{
	color: #d9363e;
}
.teal{
	color: #2b7a78;
}

.mask{
	position: fixed;
	top: 0;
	right: 0;
	bottom: 0;
	left: 0;
	background: rgba(0,0,0,.5);
}
.mark{
	position: absolute;
	left: 256px;
	top: 382px;
	width: 328px;
	height: 62px;
	border: 9px solid #ffff8c;
	box-shadow: 0 2px 4px rgba(0,0,0,.6), inset 0 2px 3px rgba(0,0,0,.6);
}

/* dialog */
.dialog{
	position: absolute;
	top: 261px;
	right: 41px;
	left: 586px;
	border-radius: 6px;
	background: #fff;
	box-shadow: 0 6px 18px rgba(0,0,0,.6);
}
.dialog__head{
	display: flex;
	align-items: center;
	justify-content: space-between;
	height: 51px;
	padding: 0 18px 4px 16px;
	border-bottom: 2px solid #b9bbbc;
	border-radius: 6px 6px 0 0;
	background: #dcddde;
	color: #111;
}
.dialog__head h1{
	margin: 0;
	font-size: 22px;
	font-weight: normal;
}
.tabs{
	display: flex;
	margin: 0 14px 0 13px;
	padding-top: 17px;
	border-bottom: 2px solid #c4c4c4;
	font-size: 18px;
	color: #5b6570;
}
.tabs__item{
	position: relative;
	padding: 6px 15px 8px;
	margin-right: 2px;
	border-bottom: 3px solid transparent;
}
.tabs__item + .tabs__item:before{
	content: '';
	position: absolute;
	left: 0;
	top: 8px;
	height: 18px;
	border-left: 1px solid #ccc;
}
.tabs__item_on{
	border-color: #1a9fd9;
	font-weight: bold;
	color: #222;
}
.panels{
	display: flex;
	align-items: flex-start;
	gap: 2px;
	margin: 10px 16px 0 13px;
}
.panel{
	display: flex;
	flex: 1;
	flex-direction: column;
	min-width: 0;
	height: 329px;
	border: 2px solid #d2d2d2;
}
.panel_url{
	height: 327px;
}
.panel__bar{
	height: 32px;
	padding: 2px 4px;
}
.panel__pick{
	width: 196px;
}
.panel_url .panel__bar{
	height: 29px;
	padding: 4px;
	color: #111;
}
.list{
	width: 100%;
	border-spacing: 0;
	color: #111;
}
.list th,
.list td{
	height: 34px;
	padding: 0 0 0 7px;
	text-align: left;
}
.list th{
	position: relative;
	padding-bottom: 1px;
	border: solid #d0d3d4;
	border-width: 2px 1px 2px 0;
	background: #eceeee;
	font-size: 13px;
	letter-spacing: 1px;
	color: #2f3538;
}
.list th svg{
	width: 16px;
	height: 14px;
	margin: 0 0 3px 10px;
	color: #9a9a9a;
	vertical-align: middle;
}
.list td{
	height: 31px;
	border-right: 1px solid #e0e0e0;
	border-bottom: 1px solid #e6e6e6;
}
.list .list__tick{
	width: 37px;
}
.list input{
	width: 19px;
	height: 19px;
	border-color: #2a93cf;
}
.marker{
	position: absolute;
	left: 4px;
	top: 0;
	width: 221px;
	height: 65px;
	background: #ffffaa;
	mix-blend-mode: multiply;
}
.panel__foot{
	display: flex;
	align-items: center;
	gap: 16px;
	height: 36px;
	margin-top: auto;
	padding: 2px 7px 0;
	border-top: 2px solid #d8d8d8;
	background: #f6f7f7;
	font-size: 16px;
}
.panel__foot svg{
	opacity: .35;
}
.dialog__foot{
	display: flex;
	justify-content: flex-end;
	gap: 8px;
	padding: 44px 14px 22px;
}
.btn{
	justify-content: center;
	width: 103px;
	height: 38px;
	border-radius: 19px;
	background: #e9eaeb;
}
.btn:disabled{
	color: #c4c7c9;
}
.btn_line{
	border: 2px solid #cfcfcf;
	background: #fff;
	color: #222;
}
```
